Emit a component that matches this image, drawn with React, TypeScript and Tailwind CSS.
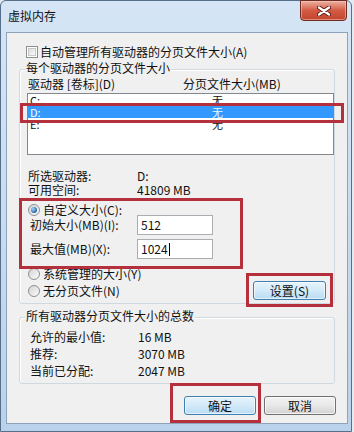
import React from "react";

function CheckBox() {
  return (
    <span className="box-border flex h-[12px] w-[12px] shrink-0 items-center justify-center border border-[#8e8f8f] bg-white">
      <span className="box-border h-[8px] w-[8px] border border-[#c9c9c9] bg-linear-to-br from-[#dcdcdc] to-[#fafafa]" />
    </span>
  );
}

function Radio({ checked }: { checked?: boolean }) {
  return (
    <span className="box-border flex h-[12px] w-[12px] shrink-0 items-center justify-center rounded-full border border-[#8e8f8f] bg-linear-to-br from-[#d4d4d4] to-[#fbfbfb]">
      {checked && (
        <span className="h-[6px] w-[6px] rounded-full bg-[radial-gradient(circle_at_35%_35%,#a8d8ff,#1c5aa0_75%)]" />
      )}
    </span>
  );
}

function Red({ className }: { className: string }) {
  return <div className={"pointer-events-none absolute box-border border-[3px] border-[#b3303c] " + className} />;
}

export default function App() {
  return (
    <div className="relative h-[432px] w-[354px] overflow-hidden bg-[#e4eaf0] text-[12px] leading-[14px] text-[#111] [font-family:'Noto_Sans_CJK_SC','Noto_Sans',sans-serif]">
      {/* window frame */}
      <div className="box-border flex h-[432px] w-[352px] flex-col rounded-t-[6px] border border-[#566f8a] bg-linear-to-b from-[#d5e5f5] via-[#c9dcf0] to-[#bad2ea]">
        {/* title bar */}
        <div className="flex h-[31px] items-start">
          <span className="ml-[7px] mt-[8px]">虚拟内存</span>
          <div className="ml-auto mr-[4px] -mt-px box-border flex h-[21px] w-[47px] items-center justify-center rounded-b-[4px] border border-[#6e2b22] bg-linear-to-b from-[#eab0a2] via-[#d35a43] to-[#c2442e] shadow-[inset_0_0_0_1px_rgba(255,210,200,0.5)]">
            <svg width="14" height="10" viewBox="0 0 14 10">
              <path d="M2 1.5 L12 8.5 M12 1.5 L2 8.5" stroke="#5a1b12" strokeWidth="4.2" strokeLinecap="round" />
              <path d="M2 1.5 L12 8.5 M12 1.5 L2 8.5" stroke="#ffffff" strokeWidth="2.4" strokeLinecap="round" />
            </svg>
          </div>
        </div>

        {/* client area */}
        <div className="ml-[5px] box-border h-[392px] w-[342px] border border-[#8ea3ba] bg-[#f0f0f0]">
          {/* auto manage checkbox */}
          <div className="mt-[13px] flex h-[12px] items-center gap-[2px] pl-[19px]">
            <CheckBox />
            <span>自动管理所有驱动器的分页文件大小(A)</span>
          </div>

          {/* group 1 */}
          <div className="relative mt-[11px] ml-[12px] box-border h-[235px] w-[316px] rounded-[3px] border border-[#d0d9df] shadow-[inset_1px_1px_0_#ffffff]">
            <span className="absolute left-[5px] top-[-9px] bg-[#f0f0f0] px-px">每个驱动器的分页文件大小</span>

            <div className="mt-[7px] flex h-[14px] pl-[8px]">
              <span className="w-[155px]">驱动器 [卷标](D)</span>
              <span>分页文件大小(MB)</span>
            </div>

            <div className="ml-[7px] mt-[2px] box-border h-[62px] w-[307px] border border-[#828790] bg-white text-[11px] leading-[12px]">
              <div className="flex h-[12px] overflow-hidden pl-[2px]">
                <span className="w-[182px]">C:</span>
                <span>无</span>
              </div>
              <div className="flex h-[12px] overflow-hidden bg-[#3399ff] pl-[2px] text-white">
                <span className="w-[182px]">D:</span>
                <span className="text-[#e8fbff]">无</span>
              </div>
              <div className="flex h-[12px] overflow-hidden pl-[2px]">
                <span className="w-[182px]">E:</span>
                <span>无</span>
              </div>
            </div>

            <div className="mt-[14px] flex h-[14px] pl-[8px]">
              <span className="w-[109px]">所选驱动器:</span>
              <span>D:</span>
            </div>
            <div className="flex h-[14px] pl-[8px]">
              <span className="w-[109px]">可用空间:</span>
              <span>41809 MB</span>
            </div>

            <div className="mt-[8px] flex h-[10px] items-center gap-[3px] pl-[8px]">
              <Radio checked />
              <span>自定义大小(C):</span>
            </div>
            <div className="flex h-[20px] items-center pl-[10px]">
              <span className="w-[107px]">初始大小(MB)(I):</span>
              <div className="box-border flex h-[20px] w-[76px] items-center border border-[#abadb3] bg-white pl-[3px]">512</div>
            </div>
            <div className="mt-[4px] flex h-[20px] items-center pl-[10px]">
              <span className="w-[107px]">最大值(MB)(X):</span>
              <div className="box-border flex h-[20px] w-[76px] items-center border border-[#abadb3] bg-white pl-[3px]">
                <span>1024</span>
                <span className="ml-px h-[13px] w-px bg-black" />
              </div>
            </div>

            <div className="flex items-start">
              <div className="flex flex-col pl-[8px]">
                <div className="mt-[9px] flex h-[12px] items-center gap-[3px]">
                  <Radio />
                  <span>系统管理的大小(Y)</span>
                </div>
                <div className="mt-[5px] flex h-[12px] items-center gap-[3px]">
                  <Radio />
                  <span>无分页文件(N)</span>
                </div>
              </div>
              <div className="ml-auto mr-[8px] mt-[22px] box-border flex h-[19px] w-[73px] items-center justify-center rounded-[3px] border border-[#3f7fae] bg-linear-to-b from-[#e6f4fc] via-[#d3eaf9] to-[#b9dcf3] shadow-[inset_0_0_0_1px_rgba(255,255,255,0.6)]">
                设置(S)
              </div>
            </div>
          </div>

          {/* group 2 */}
          <div className="relative mt-[13px] ml-[12px] box-border h-[67px] w-[316px] rounded-[3px] border border-[#d0d9df] shadow-[inset_1px_1px_0_#ffffff]">
            <span className="absolute left-[5px] top-[-9px] bg-[#f0f0f0] px-px">所有驱动器分页文件大小的总数</span>
            <div className="mt-[10px] flex h-[17px] items-center pl-[10px]">
              <span className="w-[108px]">允许的最小值:</span>
              <span>16 MB</span>
            </div>
            <div className="flex h-[17px] items-center pl-[10px]">
              <span className="w-[108px]">推荐:</span>
              <span>3070 MB</span>
            </div>
            <div className="flex h-[17px] items-center pl-[10px]">
              <span className="w-[108px]">当前已分配:</span>
              <span>2047 MB</span>
            </div>
          </div>

          {/* bottom buttons */}
          <div className="mt-[12px] flex justify-end gap-[8px] pr-[11px]">
            <div className="box-border flex h-[19px] w-[72px] items-center justify-center rounded-[3px] border border-[#3f7fae] bg-linear-to-b from-[#e6f4fc] via-[#d3eaf9] to-[#b9dcf3] shadow-[inset_0_0_0_1px_rgba(255,255,255,0.6)]">
              确定
            </div>
            <div className="box-border flex h-[19px] w-[72px] items-center justify-center rounded-[3px] border border-[#707070] bg-linear-to-b from-[#f3f3f3] via-[#e8e8e8] to-[#d2d2d2] shadow-[inset_0_0_0_1px_rgba(255,255,255,0.7)]">
              取消
            </div>
          </div>
        </div>
      </div>

      {/* red annotation boxes */}
      <Red className="left-[20px] top-[103px] h-[20px] w-[324px]" />
      <Red className="left-[19px] top-[198px] h-[71px] w-[224px]" />
      <Red className="left-[246px] top-[273px] h-[34px] w-[87px]" />
      <Red className="left-[170px] top-[383px] h-[40px] w-[91px]" />
    </div>
  );
}
